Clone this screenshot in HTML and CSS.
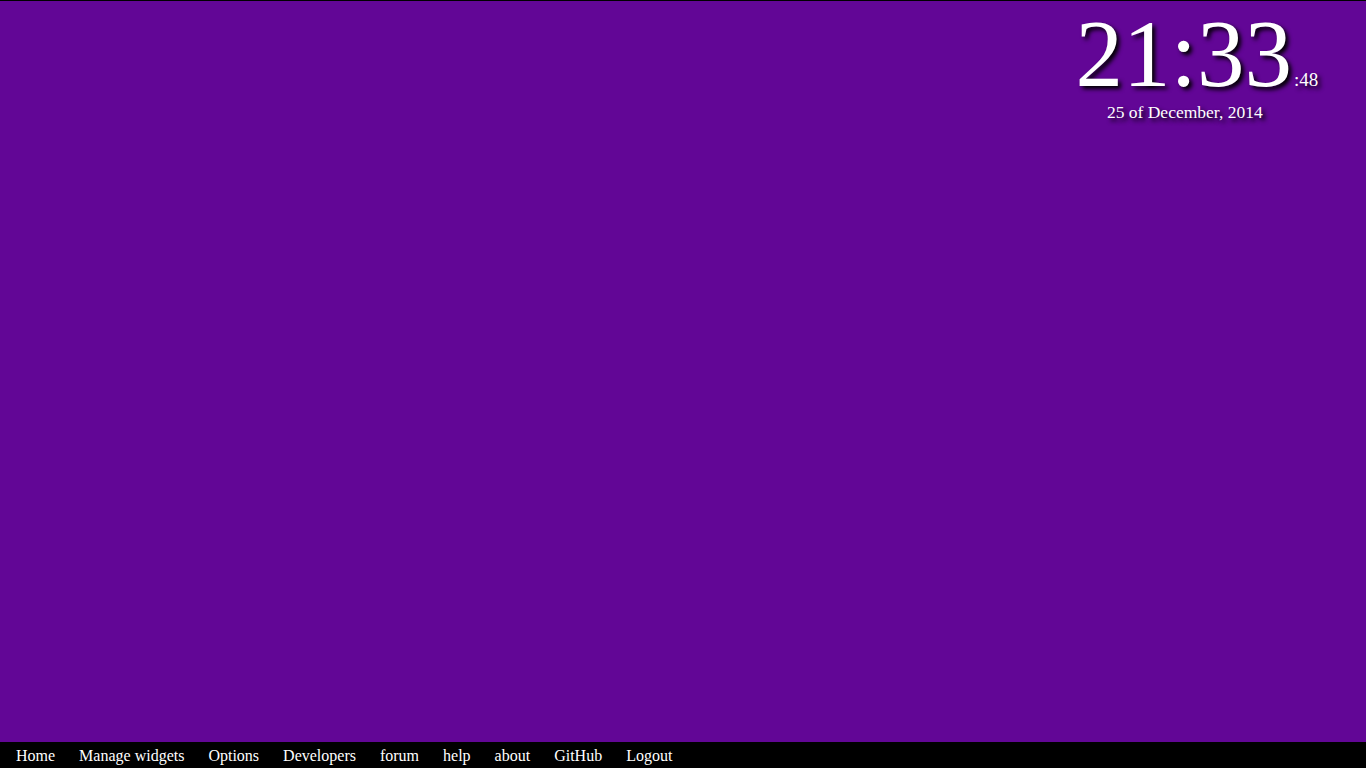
FILE: index.html
```html
<!DOCTYPE html>
<html>
<head>
<meta charset="utf-8">
<title>Home</title>
<link rel="stylesheet" href="styles.css">
</head>
<body>
    <div class="desktop">
        <div class="clock">
            <div class="time">21:33<span class="seconds">:48</span></div>
            <div class="date">25 of December, 2014</div>
        </div>
    </div>
    <div class="menu">
        <a href="#">Home</a>
        <a href="#">Manage widgets</a>
        <a href="#">Options</a>
        <a href="#">Developers</a>
        <a href="#">forum</a>
        <a href="#">help</a>
        <a href="#">about</a>
        <a href="#">GitHub</a>
        <a href="#">Logout</a>
    </div>
</body>
</html>
```

FILE: styles.css
```css
html, body {
    height: 100%;
}
body {
    margin: 0;
    box-sizing: border-box;
    border-top: 1px solid #000;
    background-color: #620696;
    font-family: "Liberation Serif", "Times New Roman", serif;
    color: #fff;
    display: flex;
    flex-direction: column;
}

.desktop {
    flex: 1;
    display: flex;
    justify-content: flex-end;
    padding-right: 72px;
    padding-top: 6px;
}

.clock {
    text-align: center;
    text-shadow: 3px 3px 4px #000;
}
.time {
    font-size: 95px;
    line-height: 1;
    white-space: nowrap;
}
.seconds {
    display: inline-block;
    width: 0;
    font-size: 19px;
    padding-left: 2px;
}
.date {
    font-size: 17.5px;
    line-height: 20px;
}

.menu {
    height: 26px;
    background: #000;
    display: flex;
    padding-left: 4px;
}
.menu a {
    color: #fff;
    text-decoration: none;
    font-size: 16px;
    line-height: 28px;
    padding: 0 12px;
}
```
